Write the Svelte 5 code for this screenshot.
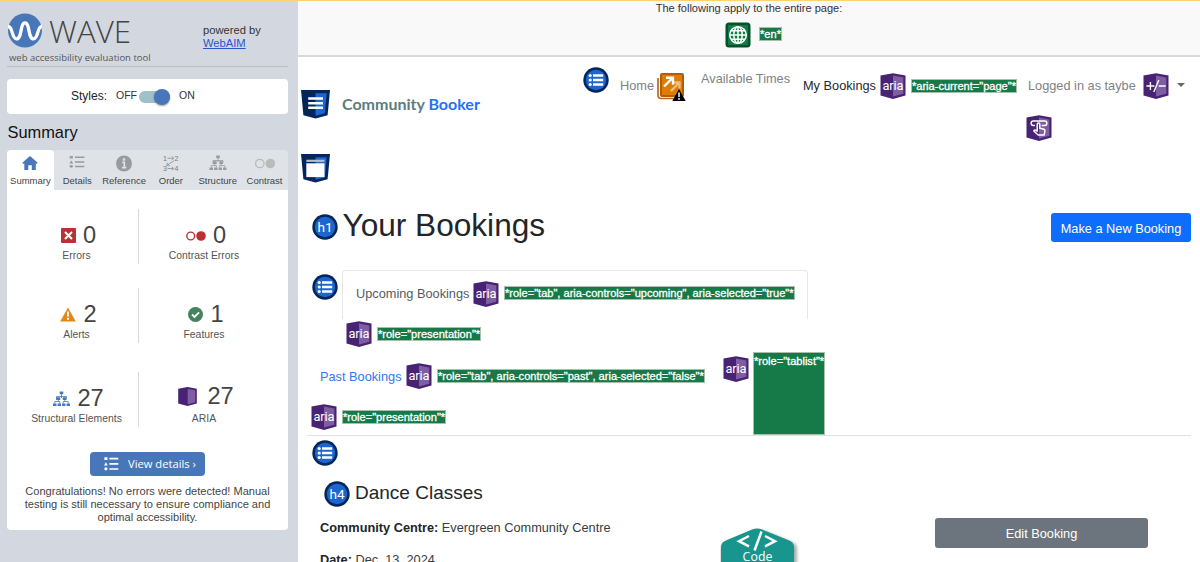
<script>
  const tabs = [
    { id: 'home', label: 'Summary' },
    { id: 'details', label: 'Details' },
    { id: 'info', label: 'Reference' },
    { id: 'order', label: 'Order' },
    { id: 'tree', label: 'Structure' },
    { id: 'contrast', label: 'Contrast' }
  ];
  const stats = [
    { id: 'error', count: 0, label: 'Errors' },
    { id: 'contrasterr', count: 0, label: 'Contrast Errors' },
    { id: 'alert', count: 2, label: 'Alerts' },
    { id: 'feature', count: 1, label: 'Features' },
    { id: 'structure', count: 27, label: 'Structural Elements' },
    { id: 'aria', count: 27, label: 'ARIA' }
  ];
</script>

{#snippet treeShape()}
  <path d="M8.5 3v4M3.500 9V5.500h10v2M1.800 12.500v-2h5v2M10.200 12.500v-2h5v2M5.200 8v2.500M11.800 8v2.500" fill="none" stroke="currentColor" stroke-width=".8" />
  <path d="M6.700 .6h3.600v2.700H6.700zM3.500 6.200h3.700v2.700H3.500zM9.800 6.200h3.700v2.700H9.800zM0 12.400h3.500V15H0zM4.600 12.400H8V15H4.600zM9.100 12.400h3.400V15H9.100zM13.600 12.400H17V15h-3.400z" fill="currentColor" />
{/snippet}

{#snippet listShape()}
  <path d="M0 0h3.2v3H0zM1.6 5.3l2 3.500H-.4z" fill="currentColor" />
  <circle cx="1.6" cy="12.2" r="1.7" fill="currentColor" />
  <path d="M5.300 1.500h9.400M5.300 7h9.400M5.300 12.400h9.400" stroke="currentColor" stroke-width="1.800" />
{/snippet}

{#snippet ariaBox(kind)}
  <svg class="badge" viewBox="0 0 26 26">
    <path d="M.5 2.6L13 .2l12.500 2.400v19.800L13 26 .5 22.400z" fill="#482373" />
    <path d="M13 2.600l10.300 1.900v16.200L13 23.600z" fill="#7f5da3" />
    {#if kind === 'aria'}
      <text x="13" y="17" text-anchor="middle" font-size="12.800" textLength="21" class="glyph">aria</text>
    {:else if kind === 'expand'}
      <path d="M3.400 13h8M7.400 9v8M10.800 19l5-12M15.700 13h7" stroke="#fff" stroke-width="1.400" fill="none" />
    {:else}
      <path d="M9 10.400H7.300a2.100 2.100 0 0 1 0-4.300h11.400a2.100 2.100 0 0 1 0 4.300h-3" fill="none" stroke="#fff" stroke-width="1.500" />
      <path d="M11.200 16.200V9.600c0-2 2.600-2 2.600 0v3.600l4.200 1c.8.300 1 .8.900 1.600l-.7 4.200h-6L8 16.200c-.4-1 .7-1.600 1.500-1.100z" fill="none" stroke="#fff" stroke-width="1.500" stroke-linejoin="round" />
    {/if}
  </svg>
{/snippet}

{#snippet roundBadge(text)}
  <svg class="badge" viewBox="0 0 26 26">
    <circle cx="13" cy="13" r="12.700" fill="#05265a" />
    <circle cx="13" cy="13" r="10.200" fill="#1d66d0" />
    {#if text}
      <text x="13" y="18" text-anchor="middle" font-size="13.600" class="glyph">{text}</text>
    {:else}
      <circle cx="7.200" cy="8.500" r="1.600" fill="#fff" /><circle cx="7.200" cy="13" r="1.600" fill="#fff" /><circle cx="7.200" cy="17.500" r="1.600" fill="#fff" />
      <path d="M10 8.500h10.200M10 13h10.200M10 17.500h10.200" stroke="#fff" stroke-width="2.500" />
    {/if}
  </svg>
{/snippet}

{#snippet shield(kind)}
  <svg class="shield" viewBox="0 0 29 29">
    <path d="M0 0h29l-2.400 25.200L14.500 28.500 2.400 25.200z" fill="#02265b" />
    <path d="M14.500 3.200h11.200l-1.900 20-9.300 2.500z" fill="#1c66d0" />
    {#if kind === 'header'}
      <path d="M7.200 8.500h14.800M7.200 13.200h14.800M7.200 17.800h14.800" stroke="#fff" stroke-width="2.500" />
    {:else}
      <path d="M5.300 5.700h18.200v2.200H5.300z" fill="#b9bec9" />
      <path d="M5.300 9.300h18.200v13.800H5.300z" fill="#fff" />
    {/if}
  </svg>
{/snippet}

<div class="screen">
  <aside>
    <div class="brand">
      <svg class="logo" viewBox="0 0 36 36">
        <circle cx="18" cy="17.500" r="17" fill="#4877b9" />
        <path d="M1 13.500c2 0 3.200 2.200 4 5.400 1.300 5 2.500 7 4.600 7 5.600 0 3.300-16 8.400-16s2.800 16 8.400 16c2.100 0 3.300-2 4.600-7 .8-3.200 2-5.400 4-5.400" fill="none" stroke="#fff" stroke-width="3.300" />
      </svg>
      <div class="wordmark">WAVE</div>
      <div class="powered">powered by<br /><span>WebAIM</span></div>
    </div>
    <div class="tagline"><span>web accessibility evaluation tool</span></div>
    <div class="styles">
      <b>Styles:</b><span class="off">OFF</span>
      <span class="switch"><i></i></span>
      <span class="on">ON</span>
    </div>
    <h2>Summary</h2>
    <div class="tabs">
      {#each tabs as tab, i}
        <div class="tab" class:active={i === 0} class:pale={tab.id === 'contrast'}>
          <svg viewBox="0 0 20 18">
            {#if tab.id === 'home'}
              <path d="M10 2l7.700 6.700-1.200 1.200-.7-.6V16h-4v-4.800H8.300V16H4.300V9.300l-.8.600-1.200-1.200z" fill="currentColor" />
            {:else if tab.id === 'details'}
              <g transform="translate(2.700 2) scale(1 .85)">{@render listShape()}</g>
            {:else if tab.id === 'info'}
              <circle cx="10" cy="9.500" r="8" fill="currentColor" />
              <path d="M10 4.300v2.400" stroke="#dfe3e8" stroke-width="2.400" />
              <path d="M8.300 8.400H10.300v5M8 13.600h4.300" fill="none" stroke="#dfe3e8" stroke-width="1.600" />
            {:else if tab.id === 'order'}
              <text x="2" y="6.500" font-size="7">1</text><text x="13.500" y="6.500" font-size="7">2</text>
              <text x="2" y="17" font-size="7">3</text><text x="13.500" y="17" font-size="7">4</text>
              <path d="M6.500 4.200h6M10.800 2.400l2 1.800-2 1.800M6.500 14.500h6M10.800 12.700l2 1.800-2 1.800M13 6.800l-7 4.500M6.500 8.800L5.700 11.500l3 .2" fill="none" stroke="currentColor" stroke-width="1" />
            {:else if tab.id === 'tree'}
              <g transform="translate(1.500 1)">{@render treeShape()}</g>
            {:else}
              <circle cx="4.800" cy="9.500" r="4.200" fill="none" stroke="currentColor" stroke-width="1.300" />
              <circle cx="15.300" cy="9.500" r="4.800" fill="currentColor" />
            {/if}
          </svg>
          <span>{tab.label}</span>
        </div>
      {/each}
    </div>
    <div class="panel">
      <div class="stats">
        {#each stats as s}
          <div class="stat" class:structure={s.id === 'structure'} class:aria={s.id === 'aria'}>
            <div class="figure">
              {#if s.id === 'error'}
                <svg width="15" height="15" viewBox="0 0 15 15"><rect width="15" height="15" rx="1" fill="#b93138" /><path d="M4 4l7 7M11 4l-7 7" stroke="#fff" stroke-width="2" /></svg>
              {:else if s.id === 'contrasterr'}
                <svg width="20" height="10" viewBox="0 0 20 10"><circle cx="4.700" cy="5" r="3.900" fill="none" stroke="#b93138" stroke-width="1.400" /><circle cx="15" cy="5" r="4.800" fill="#b93138" /></svg>
              {:else if s.id === 'alert'}
                <svg width="16" height="15" viewBox="0 0 16 15"><path d="M8 .5L15.800 14.500H.2z" fill="#e3871a" /><path d="M8 4.500v5M8 10.800v2" stroke="#fff" stroke-width="1.900" /></svg>
              {:else if s.id === 'feature'}
                <svg width="15" height="15" viewBox="0 0 15 15"><circle cx="7.500" cy="7.500" r="7.500" fill="#43835f" /><path d="M4 7.500l2.500 2.400 4.600-4.600" fill="none" stroke="#fff" stroke-width="1.900" /></svg>
              {:else if s.id === 'structure'}
                <svg width="17" height="16" viewBox="0 0 17 16">{@render treeShape()}</svg>
              {:else}
                <svg width="19" height="19" viewBox="0 0 19 19"><path d="M.2 1.700L9.500 0l9.300 1.700v14.700L9.500 19 .2 16.400z" fill="#482373" /><path d="M9.700 2l7.500 1.300v12l-7.500 2z" fill="#7f5da3" /></svg>
              {/if}
              <span>{s.count}</span>
            </div>
            <div class="label">{s.label}</div>
          </div>
        {/each}
      </div>
      <div class="view">
        <svg width="17" height="14" viewBox="-.5 -.3 16 14.800">{@render listShape()}</svg>
        <span>View details ›</span>
      </div>
      <p>Congratulations! No errors were detected! Manual<br />testing is still necessary to ensure compliance and<br />optimal accessibility.</p>
    </div>
  </aside>

  <main>
    <div class="notice">
      <div>The following apply to the entire page:</div>
      <div class="lang">
        <svg class="badge" viewBox="0 0 26 26">
          <rect x=".5" y=".5" width="25" height="25" rx="3.500" fill="#04522b" />
          <rect x="3" y="3" width="20" height="20" fill="#137a45" />
          <g fill="none" stroke="#fff" stroke-width="1.500">
            <circle cx="13" cy="13" r="8.300" /><ellipse cx="13" cy="13" rx="4.200" ry="8.300" />
            <path d="M13 4.700v16.600M4.700 13h16.600M6 8.800h14M6 17.200h14" />
          </g>
        </svg>
        <span class="tag">*en*</span>
      </div>
    </div>

    <header>
      <div class="site">{@render shield('header')}<strong>Community <em>Booker</em></strong></div>
      <nav>
        <div class="up">{@render roundBadge('')}</div>
        <div class="home">
          <span>Home</span>
          <svg width="30" height="30" viewBox="0 0 30 30">
            <path d="M1 6v17.500a3 3 0 0 0 3 3h17" fill="none" stroke="#b8692a" stroke-width="1.700" />
            <rect x="3" y="1" width="24" height="24" rx="2" fill="#b45e04" />
            <rect x="5" y="3" width="20" height="20" fill="#dd7d05" />
            <path d="M14 19l8-8M16.500 10.500h6v6" fill="none" stroke="#f3bd80" stroke-width="2.300" />
            <path d="M7 14.500l8-8M9 5.700h7v7" fill="none" stroke="#fff" stroke-width="2.400" />
            <path d="M22 17l6.700 12H15.300z" fill="#000" />
            <path d="M22 20.500v4.500M22 26v1.800" stroke="#fff" stroke-width="1.500" />
          </svg>
        </div>
        <div class="times">Available Times</div>
        <div class="mine"><span>My Bookings</span>{@render ariaBox('aria')}<span class="tag">*aria-current="page"*</span></div>
        <div class="user">
          <div><span>Logged in as taybe</span>{@render ariaBox('expand')}<i></i></div>
          {@render ariaBox('popup')}
        </div>
      </nav>
    </header>

    <div class="region">{@render shield('main')}</div>

    <div class="title">
      {@render roundBadge('h1')}
      <h1>Your Bookings</h1>
      <button>Make a New Booking</button>
    </div>

    <div class="tablist">
      <div class="upcoming">
        {@render roundBadge('')}
        <div class="card"><span>Upcoming Bookings</span>{@render ariaBox('aria')}<span class="tag">*role="tab", aria-controls="upcoming", aria-selected="true"*</span></div>
      </div>
      <div class="presentation">{@render ariaBox('aria')}<span class="tag">*role="presentation"*</span></div>
      <div class="lower">
        <div class="pasts">
          <div class="past"><span>Past Bookings</span>{@render ariaBox('aria')}<span class="tag">*role="tab", aria-controls="past", aria-selected="false"*</span></div>
          <div class="presentation second">{@render ariaBox('aria')}<span class="tag">*role="presentation"*</span></div>
        </div>
        {@render ariaBox('aria')}
        <div class="tag tall">*role="tablist"*</div>
      </div>
    </div>

    <div class="bookings">
      {@render roundBadge('')}
      <div class="class">{@render roundBadge('h4')}<h4>Dance Classes</h4></div>
      <div class="row">
        <div class="facts">
          <p><b>Community Centre:</b> Evergreen Community Centre</p>
          <p><b>Date:</b> Dec. 13, 2024</p>
        </div>
        <div class="code">
          <svg width="84" height="60" viewBox="0 0 84 60">
            <path d="M7 14q-6 2-6 7v41h76V21q0-5-5-7L46 3.500q-7-2-12 0z" fill="#777" opacity=".6" class="shade" />
            <path d="M7 12q-6 2-6 7v41h73V19q0-5-6-7L42 1.500q-5-2-10 0z" fill="#18968d" />
            <path d="M29 8L19 13.200 29 18.400M45 8l10 5.200-10 5.200M41.500 3.500l-7 19" fill="none" stroke="#fff" stroke-width="2.500" />
            <text x="37.500" y="33" text-anchor="middle" font-size="12.300" textLength="30">Code</text>
          </svg>
        </div>
        <button>Edit Booking</button>
      </div>
    </div>
  </main>
</div>

<style>
  :global(body) { margin: 0; overflow: hidden; }
  * { box-sizing: border-box; }
  .screen { display: flex; width: 1200px; height: 562px; overflow: hidden; border-top: 1px solid #ffd36b; background: #fff; font-family: "Liberation Sans", Arial, sans-serif; white-space: nowrap; }
  svg { display: block; flex: none; }
  h1, h2, h4, p { margin: 0; font-weight: 400; }
  button { border: 0; padding: 0; color: #fff; font: 12.750px "Liberation Sans", Arial, sans-serif; border-radius: 3px; }
  .badge { width: 26px; height: 26px; }
  .shield { width: 29px; height: 29px; }
  .glyph { fill: #fff; font-family: Roboto, sans-serif; }

  aside { width: 298px; flex: none; padding: 0 10px 0 7px; background: #d3d8e0; color: #333; }
  .brand { display: flex; height: 50px; padding-top: 12px; }
  .logo { width: 36px; height: 36px; }
  .wordmark { width: 154px; margin-left: 6px; font: 300 31.300px/36px "Open Sans", sans-serif; color: #444; }
  .powered { font-size: 11.200px; line-height: 13px; padding-top: 11px; }
  .powered span { color: #2a55c9; text-decoration: underline; }
  .tagline { height: 16px; border-bottom: 1px solid #bcc0c5; padding-left: 2px; font: 9.500px/13px "Open Sans", sans-serif; color: #555; }
  .styles { display: flex; align-items: center; height: 35px; margin-top: 12px; padding-left: 64px; background: #fff; border-radius: 4px; }
  .styles b { font-weight: 400; font-size: 12px; line-height: 14px; margin-top: -2px; width: 45px; color: #222; }
  .styles .off, .styles .on { font-size: 10.500px; margin-top: -3px; }
  .off { width: 23px; }
  .switch { width: 31px; height: 12px; border-radius: 6px; background: #9fc0c8; display: flex; justify-content: flex-end; align-items: center; }
  .switch i { width: 16px; height: 16px; border-radius: 50%; background: #4877b9; box-shadow: 0 1px 2px #0006; flex: none; }
  .on { margin-left: 9px; }
  h2 { height: 36px; padding-left: .500px; font-size: 16.400px; line-height: 36px; color: #111; }
  .tabs { display: flex; height: 40px; background: #dfe3e8; border-radius: 4px 4px 0 0; }
  .tab { flex: 1 1 0; display: flex; flex-direction: column; align-items: center; color: #999b9e; }
  .tab svg { width: 20px; height: 18px; margin-top: 4px; }
  .tab span { margin-top: 3px; font-size: 9.500px; line-height: 12px; color: #444; }
  .tab.active { background: #fff; color: #4877b9; border-radius: 4px 4px 0 0; }
  .tab.pale { color: #b9bbbd; }
  .tab text { fill: #77797c; }
  .panel { height: 340px; background: #fff; border-radius: 0 0 4px 4px; padding: 19px 19px 0 8px; }
  .stats { display: grid; grid-template-columns: 124px 130px; grid-template-rows: 79px 84px 79px; }
  .stat { height: 55px; padding-top: 14px; text-align: center; }
  .stat:nth-child(odd) { border-right: 1px solid #d9d9d9; }
  .figure { height: 25px; display: flex; justify-content: center; align-items: center; padding-left: 4px; }
  .figure span { margin-left: 7px; font-size: 23.600px; line-height: 25px; color: #444; }
  .label { margin-top: 1px; font-size: 10.400px; line-height: 13px; color: #555; }
  .structure { color: #4877b9; }
  .aria .figure { height: 21px; }
  .aria .label { margin-top: 5px; }
  .aria .figure span { margin-left: 10px; }
  .view { display: flex; align-items: center; width: 115px; height: 24px; margin: 1px 0 0 75px; padding-left: 13px; background: #4877b9; color: #fff; border-radius: 4px; font: 11.200px/22px "Open Sans", sans-serif; }
  .view span { margin-left: 8px; }
  .panel p { width: 281px; margin: 9px 0 0 -8px; text-align: center; font-size: 11.060px; line-height: 13.200px; color: #444; }

  main { flex: 1; min-width: 0; color: #212529; font-size: 12.750px; }
  .notice { height: 56px; border-bottom: 2px solid #d8d8d8; background: #f9f9f9; text-align: center; padding-top: 1px; font-size: 11.060px; line-height: 13px; color: #333; }
  .lang { display: flex; justify-content: center; align-items: center; gap: 8px; margin: 7px 0 0 9px; }
  .tag { flex: none; background: #167a48; color: #fff; font-size: 11.060px; line-height: 12px; border: 1px solid #a9bfae; -webkit-text-stroke: .300px #fff; }
  .lang .tag { margin-top: -2px; }

  header { display: flex; height: 97px; }
  .site { display: flex; width: 286px; padding: 33px 0 0 3px; }
  .site strong { margin: 4px 0 0 12px; font: 700 16px/20px Lato, sans-serif; color: #5a7c80; }
  .site em { font-style: normal; color: #2670f5; }
  nav { display: flex; color: #808284; line-height: 16px; }
  nav div { display: flex; }
  .up { width: 37px; margin-left: -1px; padding-top: 10px; }
  .home { width: 81px; padding-top: 15px; }
  .home span { width: 37px; padding-top: 6px; }
  .times { width: 102px; padding-top: 14px; }
  .mine { width: 225px; align-items: center; height: 26px; margin-top: 16px; color: #25292d; }
  .mine > span:first-child { width: 77px; }
  .mine .tag { margin-left: 5px; }
  .user { flex-direction: column; padding-top: 16px; gap: 16px; }
  .user div { align-items: center; }
  .user span { width: 115px; }
  .user > .badge { margin-left: -2px; }
  .user i { margin-left: 8px; margin-bottom: 3px; border: 4px solid transparent; border-top-color: #666; border-bottom: 0; }

  .region { height: 56px; padding-left: 3px; }
  .title { display: flex; height: 60px; padding: 0 9px 0 13px; }
  .title .badge { margin: 4px 0 0 1px; }
  h1 { flex: 1; margin-left: 4.500px; font-size: 31.600px; line-height: 30px; }
  .title button { width: 140px; height: 29px; margin-top: 3px; padding-top: 1px; background: #0d6efd; }

  .tablist { height: 166px; margin: 0 9px; border-bottom: 1px solid #dfe2e5; }
  .upcoming { display: flex; height: 51px; padding-left: 5px; }
  .upcoming > .badge { margin-top: 4px; }
  .card { display: flex; align-items: center; width: 466px; height: 49px; margin-left: 4px; padding: 0 0 3px 13px; border: 1px solid #e4e7ea; border-bottom: 0; border-radius: 4px 4px 0 0; color: #555c63; }
  .card > span:first-child { width: 117px; }
  .card .tag, .past .tag, .presentation .tag { margin-left: 5px; }
  .card .tag { margin-top: -1px; }
  .presentation { display: flex; align-items: center; height: 26px; padding-left: 39px; }
  .lower { display: flex; height: 83px; margin-top: 5px; }
  .lower > .badge { margin-top: 4px; }
  .pasts { width: 416px; padding-top: 11px; }
  .past { display: flex; align-items: center; height: 26px; padding-left: 13px; color: #2e7af0; }
  .past > span:first-child { width: 86px; }
  .second { margin-top: 15px; padding-left: 4px; }
  .tall { width: 72px; height: 83px; margin-left: 4px; padding-top: 2px; }

  .bookings { padding: 4px 0 0 14px; }
  .class { display: flex; height: 40px; margin: 15px 0 0 12px; }
  h4 { margin-left: 5px; font-size: 19px; line-height: 23px; }
  .row { display: flex; margin-left: 8px; }
  .facts { width: 400px; margin-top: -1px; line-height: 16px; color: #383c40; }
  .facts p { margin-bottom: 16px; }
  .facts b { color: #212529; }
  .code { width: 215px; margin-top: 7px; }
  .code text { font-family: "Open Sans", sans-serif; fill: #fff; }
  .shade { filter: blur(1.500px); }
  .row button { width: 213px; height: 30px; margin-top: -3px; background: #6c757d; }
</style>
